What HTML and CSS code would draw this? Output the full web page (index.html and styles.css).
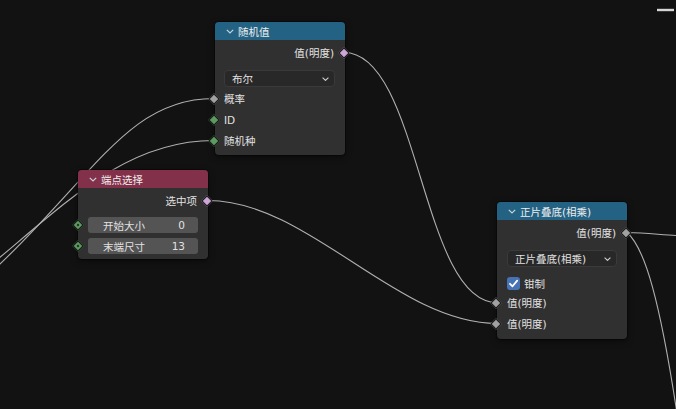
FILE: index.html
```html
<!DOCTYPE html>
<html>
<head>
  <meta charset="utf-8">
  <link rel="stylesheet" href="styles.css">
</head>
<body>
  <div class="canvas">
    <svg class="wires" width="676" height="409" viewBox="0 0 676 409">
      <path d="M-40,300 C90,190 120,98.5 214,98.5" />
      <path d="M-30,282 C60,210 120,140.5 214,140.5" />
      <path d="M344,52.5 C420,52.5 421,302.5 497,302.5" />
      <path d="M208,200.5 C308,200.5 397,323.5 497,323.5" />
      <path d="M627,232.5 C648,233 662,235 676,235.5" />
      <path d="M627,232.5 C645,248 660,300 678,420" />
      <path class="wire-hot" d="M657,10 H674" />
    </svg>

    <!-- 随机值 -->
    <div class="node node-random">
      <div class="node-head head-blue">
        <svg class="chev" viewBox="0 0 8 5"><path d="M0.8 0.8 L4 4 L7.2 0.8" /></svg>
        随机值
      </div>
      <div class="node-body">
        <div class="row out">值(明度)<span class="sock sock-out pink"></span></div>
        <div class="drop-row">
          <div class="dropdown">
            <span>布尔</span>
            <svg class="drop-chev" viewBox="0 0 7 4"><path d="M0.6 0.6 L3.5 3.4 L6.4 0.6" /></svg>
          </div>
        </div>
        <div class="row"><span class="sock sock-in grey"></span>概率</div>
        <div class="row"><span class="sock sock-in green"></span>ID</div>
        <div class="row"><span class="sock sock-in green"></span>随机种</div>
      </div>
    </div>

    <!-- 端点选择 -->
    <div class="node node-endpoint">
      <div class="node-head head-pink">
        <svg class="chev" viewBox="0 0 8 5"><path d="M0.8 0.8 L4 4 L7.2 0.8" /></svg>
        端点选择
      </div>
      <div class="node-body body-fields">
        <div class="row out">选中项<span class="sock sock-out pink"></span></div>
        <div class="field"><span class="sock sock-field green dot"></span><span>开始大小</span><span>0</span></div>
        <div class="field"><span class="sock sock-field green dot"></span><span>末端尺寸</span><span>13</span></div>
      </div>
    </div>

    <!-- 正片叠底(相乘) -->
    <div class="node node-mix">
      <div class="node-head head-blue">
        <svg class="chev" viewBox="0 0 8 5"><path d="M0.8 0.8 L4 4 L7.2 0.8" /></svg>
        正片叠底(相乘)
      </div>
      <div class="node-body">
        <div class="row out">值(明度)<span class="sock sock-out grey"></span></div>
        <div class="drop-row">
          <div class="dropdown">
            <span>正片叠底(相乘)</span>
            <svg class="drop-chev" viewBox="0 0 7 4"><path d="M0.6 0.6 L3.5 3.4 L6.4 0.6" /></svg>
          </div>
        </div>
        <div class="check-row">
          <span class="checkbox">
            <svg viewBox="0 0 13 13"><path d="M3 6.8 L5.5 9.3 L10.2 3.6" /></svg>
          </span>
          钳制
        </div>
        <div class="row"><span class="sock sock-in grey"></span>值(明度)</div>
        <div class="row"><span class="sock sock-in grey"></span>值(明度)</div>
      </div>
    </div>
  </div>
</body>
</html>
```

FILE: styles.css
```css
* {
  margin: 0;
  padding: 0;
  box-sizing: border-box;
}

body {
  width: 676px;
  height: 409px;
  background: #121212;
  font-family: "DejaVu Sans", "Noto Sans CJK SC", sans-serif;
  font-size: 10.5px;
  color: #e2e2e2;
  overflow: hidden;
}

.canvas {
  position: relative;
  width: 676px;
  height: 409px;
}

.wires {
  position: absolute;
  left: 0;
  top: 0;
}

.wires path {
  fill: none;
  stroke: #b0b0b0;
  stroke-width: 1.1;
}

.wires .wire-hot {
  stroke: #d6d6d6;
  stroke-width: 2.4;
}

/* nodes */
.node {
  position: absolute;
  width: 130px;
  background: #303030;
  border-radius: 4px;
  box-shadow: 0 0 0 1px rgba(0, 0, 0, 0.35), 0 2px 6px rgba(0, 0, 0, 0.5);
}

.node-random { left: 215px; top: 22px; }
.node-endpoint { left: 78px; top: 170px; }
.node-mix { left: 497px; top: 202px; }

.node-head {
  height: 18px;
  display: flex;
  align-items: center;
  gap: 4px;
  padding-left: 11px;
  border-radius: 4px 4px 0 0;
  color: #eeeeee;
}

.head-blue { background: #246283; }
.head-pink { background: #83314a; }

.chev {
  width: 8px;
  height: 5px;
}

.chev path {
  fill: none;
  stroke: #c8d2da;
  stroke-width: 1.2;
}

.node-body {
  padding: 2px 0 5px;
}

.node-random .node-body {
  padding-bottom: 4px;
}

.row {
  position: relative;
  height: 21px;
  display: flex;
  align-items: center;
  padding: 0 10px 0 9px;
}

.row.out {
  justify-content: flex-end;
  padding-right: 11px;
}

.node-mix .row {
  padding-left: 10px;
}

/* sockets */
.sock {
  position: absolute;
  top: 50%;
  width: 8px;
  height: 8px;
  margin-top: -4px;
  border: 1px solid #161616;
  transform: rotate(45deg);
}

.sock-in { left: -5px; }
.sock-out { right: -3px; }
.sock-field { left: -14px; }

.pink { background: #cca6d6; }
.grey { background: #a1a1a1; }
.green { background: #5d9a60; }

.sock.dot::after {
  content: '';
  position: absolute;
  left: 2px;
  top: 2px;
  width: 2px;
  height: 2px;
  background: #1e2a1e;
}

/* dropdown */
.drop-row {
  padding: 7px 10px 1px 9px;
}

.node-mix .drop-row {
  padding-left: 10px;
}

.dropdown {
  height: 17px;
  display: flex;
  align-items: center;
  justify-content: space-between;
  padding: 0 5px 0 7px;
  background: #282828;
  border: 1px solid #3a3a3a;
  border-radius: 4px;
}

.drop-chev {
  width: 7px;
  height: 4px;
}

.drop-chev path {
  fill: none;
  stroke: #d0d0d0;
  stroke-width: 1.1;
}

/* fields */
.body-fields {
  padding-bottom: 5px;
}

.field {
  position: relative;
  height: 16px;
  margin: 5px 10px 0;
  display: flex;
  align-items: center;
  justify-content: space-between;
  padding: 0 13px 0 15px;
  background: #545454;
  border-radius: 3px;
}

.row + .field {
  margin-top: 6px;
}

/* checkbox */
.check-row {
  height: 18px;
  margin-top: 6px;
  display: flex;
  align-items: center;
  gap: 4px;
  padding-left: 10px;
}

.checkbox {
  width: 13px;
  height: 13px;
  background: #4772b3;
  border-radius: 3px;
  display: flex;
}

.checkbox svg {
  width: 13px;
  height: 13px;
}

.checkbox path {
  fill: none;
  stroke: #ffffff;
  stroke-width: 1.8;
  stroke-linecap: round;
  stroke-linejoin: round;
}
```
